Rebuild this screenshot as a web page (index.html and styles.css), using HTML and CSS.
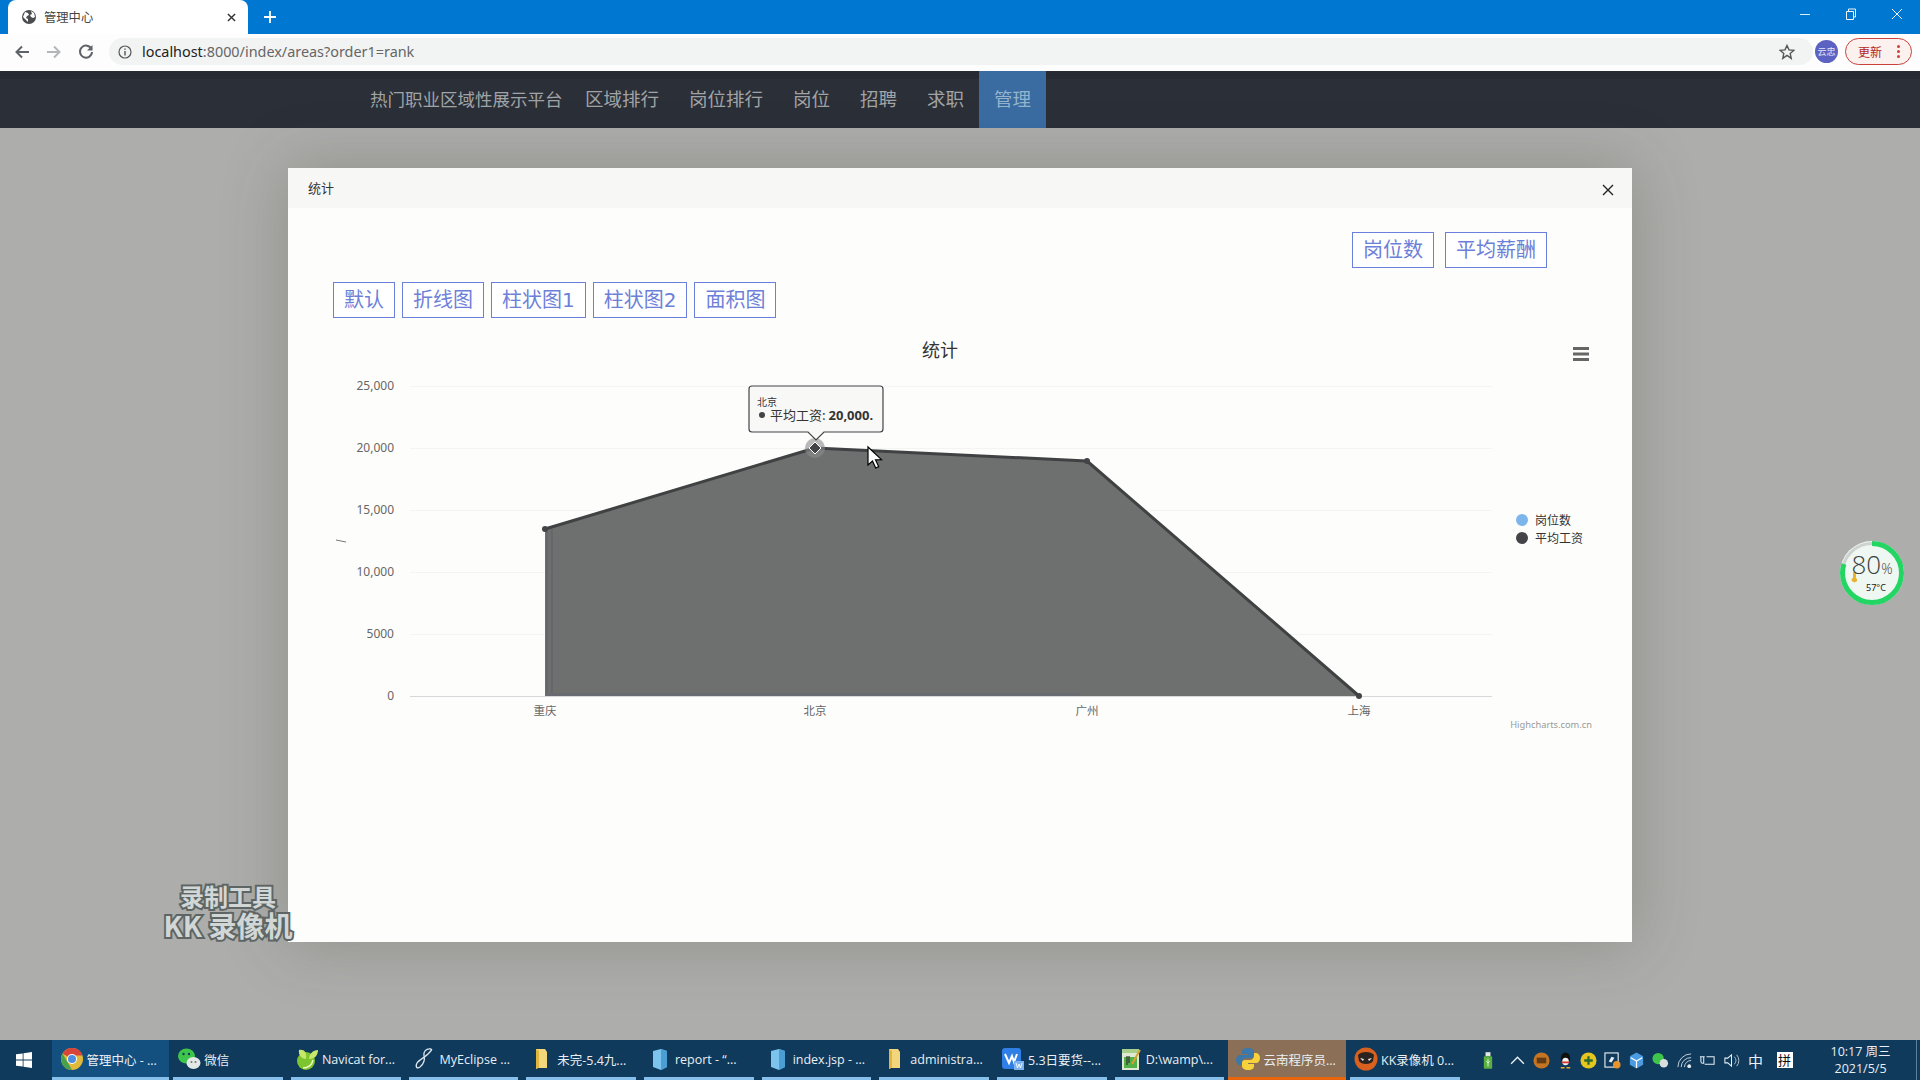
FILE: index.html
```html
<!DOCTYPE html>
<html lang="zh">
<head>
  <meta charset="UTF-8" />
  <title>管理中心</title>
  <link rel="stylesheet" href="styles.css">
</head>
<body>
  <div class="tabbar">
    <div class="tab">
      <svg class="favicon" viewBox="0 0 16 16"><circle cx="8" cy="8" r="7" fill="#4a4d50"/><path d="M4 3l3 1 1 2-2 1-1 2 2 1v3l-3-3-2-2zM10 2l3 2 1 4-2 1-2-1-1-2 2-1z" fill="#fff"/></svg>
      <span class="tab-title">管理中心</span>
      <svg class="tab-close" viewBox="0 0 10 10"><path d="M1 1l8 8M9 1l-8 8" stroke="#333" stroke-width="1.6"/></svg>
    </div>
    <svg class="new-tab" viewBox="0 0 12 12"><path d="M6 0v12M0 6h12" stroke="#fff" stroke-width="1.8"/></svg>
    <div class="win-btns">
      <svg viewBox="0 0 12 12"><path d="M1 6.5h10" stroke="#dfeefa" stroke-width="1"/></svg>
      <svg viewBox="0 0 12 12"><path d="M1.5 3.5h7v8h-7zM3.5 3.5v-2.5h7v8h-2" fill="none" stroke="#eef6fc" stroke-width="1"/></svg>
      <svg viewBox="0 0 12 12"><path d="M1 1l10 10M11 1l-10 10" stroke="#eef6fc" stroke-width="1"/></svg>
    </div>
  </div>

  <div class="toolbar">
    <svg class="tool-icon" viewBox="0 0 16 16"><path d="M15 8H3M8 2.5L2.5 8 8 13.5" fill="none" stroke="#5f6368" stroke-width="2"/></svg>
    <svg class="tool-icon" viewBox="0 0 16 16"><path d="M1 8h12M8 2.5L13.5 8 8 13.5" fill="none" stroke="#b4b6b8" stroke-width="2"/></svg>
    <svg class="tool-icon" viewBox="0 0 16 16"><path d="M13.5 5.2A6 6 0 1 0 14 8" fill="none" stroke="#5f6368" stroke-width="2"/><path d="M14.5 1v5.5H9z" fill="#5f6368"/></svg>
    <div class="omnibox">
      <svg class="info-icon" viewBox="0 0 14 14"><circle cx="7" cy="7" r="6" fill="none" stroke="#555" stroke-width="1.2"/><path d="M7 6v4.5M7 3.4v1.4" stroke="#555" stroke-width="1.4"/></svg>
      <span class="url"><span class="url-host">localhost</span>:8000/index/areas?order1=rank</span>
      <svg class="star" viewBox="0 0 16 16"><path d="M8 1.5l2 4.4 4.8.5-3.6 3.2 1 4.7L8 11.4l-4.2 2.9 1-4.7L1.2 6.4 6 5.9z" fill="none" stroke="#555" stroke-width="1.4"/></svg>
    </div>
    <div class="avatar">云忠</div>
    <div class="update-pill"><span>更新</span><span class="dots"><i></i><i></i><i></i></span></div>
  </div>

  <nav class="navbar">
    <a class="brand">热门职业区域性展示平台</a>
    <a class="nav-link nav-first">区域排行</a>
    <a class="nav-link">岗位排行</a>
    <a class="nav-link">岗位</a>
    <a class="nav-link">招聘</a>
    <a class="nav-link">求职</a>
    <a class="nav-link active">管理</a>
  </nav>

  <main class="stage">
    <section class="modal">
      <header class="modal-head">
        <span class="modal-title">统计</span>
        <svg class="modal-close" viewBox="0 0 12 12"><path d="M1 1l10 10M11 1L1 11" stroke="#222" stroke-width="1.4"/></svg>
      </header>
      <div class="modal-body">
        <div class="btn-row btn-row-right">
          <button class="btn">岗位数</button>
          <button class="btn">平均薪酬</button>
        </div>
        <div class="btn-row">
          <button class="btn">默认</button>
          <button class="btn">折线图</button>
          <button class="btn">柱状图1</button>
          <button class="btn">柱状图2</button>
          <button class="btn">面积图</button>
        </div>
        <svg class="chart" viewBox="0 0 1280 400">
          <text class="chart-title" x="620" y="27">统计</text>
          <g class="menu-icon"><rect x="1253" y="17" width="16" height="3"/><rect x="1253" y="22.5" width="16" height="3"/><rect x="1253" y="28" width="16" height="3"/></g>
          <g class="grid">
            <path d="M90 56.5H1172"/><path d="M90 118.5H1172"/><path d="M90 180.5H1172"/><path d="M90 242.5H1172"/><path d="M90 304.5H1172"/>
          </g>
          <path class="axis" d="M90 366.5H1172"/>
          <g class="y-labels">
            <text x="74" y="60">25,000</text>
            <text x="74" y="122">20,000</text>
            <text x="74" y="184">15,000</text>
            <text x="74" y="246">10,000</text>
            <text x="74" y="308">5000</text>
            <text x="74" y="370">0</text>
          </g>
          <path class="y-title" d="M16 210l10 2"/>
          <path class="area" d="M225 199L495 118 767 131 1039 366H225z"/>
          <path class="area-inner" d="M227 199v167M232 197v169"/>
          <path class="area-base" d="M225 364.500H760"/>
          <path class="area-line" d="M225 199L495 118 767 131 1039 366"/>
          <circle class="pt" cx="225" cy="199" r="3"/>
          <circle class="pt" cx="767" cy="131" r="3"/>
          <circle class="pt" cx="1039" cy="366" r="3"/>
          <circle class="halo" cx="495" cy="118" r="10"/>
          <path class="hover-pt" d="M495 112l6 6-6 6-6-6z"/>
          <g class="x-labels">
            <text x="225" y="385">重庆</text>
            <text x="495" y="385">北京</text>
            <text x="767" y="385">广州</text>
            <text x="1039" y="385">上海</text>
          </g>
          <g class="legend">
            <circle cx="1202" cy="190" r="6" fill="#7cb5ec"/>
            <text x="1215" y="195">岗位数</text>
            <circle cx="1202" cy="208" r="6" fill="#434348"/>
            <text x="1215" y="213">平均工资</text>
          </g>
          <text class="credit" x="1272" y="398">Highcharts.com.cn</text>
          <g class="tip">
            <path class="tip-box" d="M432 56h128a3 3 0 0 1 3 3v40a3 3 0 0 1-3 3H504l-8 8-8-8H432a3 3 0 0 1-3-3V59a3 3 0 0 1 3-3z"/>
            <text class="tip-head" x="437" y="76">北京</text>
            <circle cx="442" cy="85" r="3" fill="#434348"/>
            <text class="tip-line" x="450" y="89.500">平均工资: <tspan class="tip-num">20,000.</tspan></text>
          </g>
          <path class="cursor" d="M548 117v18l4.500-4 3.200 7 3-1.400-3.200-6.800 6-.2z"/>
        </svg>
      </div>
    </section>

    <div class="gauge">
      <svg viewBox="0 0 66 66">
        <circle cx="33" cy="33" r="32" fill="#eef7f1"/>
        <circle cx="33" cy="33" r="29.500" fill="none" stroke="#cfd3d0" stroke-width="3"/>
        <circle cx="33" cy="33" r="29.500" fill="none" stroke="#23d563" stroke-width="5" stroke-dasharray="148 186" transform="rotate(-90 33 33)"/>
        <path d="M13 41a3 3 0 0 0 5 0v-1a2 2 0 0 0-1-2v-5a1.500 1.500 0 0 0-3 0v5a2 2 0 0 0-1 3z" fill="#e8b32e"/>
      </svg>
      <div class="gauge-pct">80<small>%</small></div>
      <div class="gauge-temp">57°C</div>
    </div>

    <div class="watermark">
      <div class="wm-top">录制工具</div>
      <div class="wm-bottom">KK 录像机</div>
    </div>
  </main>

  <footer class="taskbar">
    <svg class="start" viewBox="0 0 16 16"><path d="M0 2.300l6.700-.9v6.200H0zM7.500 1.300L16 0v7.600H7.500zM0 8.400h6.700v6.200L0 13.700zM7.500 8.400H16V16l-8.500-1.200z" fill="#fff"/></svg>
    <div class="tb-item active">
      <svg class="tb-icon" viewBox="0 0 24 24"><circle cx="12" cy="12" r="11" fill="#e0b93a"/><path d="M12 12L2.500 6.500A11 11 0 0 1 22.500 8.500H12z" fill="#d8443a"/><path d="M12 23A11 11 0 0 1 2.500 6.500L8 16z" fill="#4aa14d"/><circle cx="12" cy="12" r="5" fill="#fff"/><circle cx="12" cy="12" r="4" fill="#4b8de0"/></svg>
      <span>管理中心 - ...</span>
    </div>
    <div class="tb-item">
      <svg class="tb-icon" viewBox="0 0 24 24"><ellipse cx="9.500" cy="9" rx="8.500" ry="7.500" fill="#3ec64a"/><ellipse cx="16.500" cy="16" rx="7" ry="6" fill="#e3e7e6"/><circle cx="6.500" cy="7" r="1.200" fill="#0f3a5c"/><circle cx="12" cy="7" r="1.200" fill="#0f3a5c"/><circle cx="14.500" cy="15" r="1" fill="#777"/><circle cx="18.500" cy="15" r="1" fill="#777"/></svg>
      <span>微信</span>
    </div>
    <div class="tb-item">
      <svg class="tb-icon" viewBox="0 0 24 24"><circle cx="11" cy="14" r="9" fill="#7cc52e"/><path d="M4 3c5-1 8 2 7 9-4 0-8-4-7-9zM14 12c0-5 4-9 9-9 0 5-3 9-9 9z" fill="#c8e86a"/><path d="M8 21c5 0 9-3 10-8" fill="none" stroke="#f2f7c8" stroke-width="1.500"/></svg>
      <span>Navicat for...</span>
    </div>
    <div class="tb-item">
      <svg class="tb-icon" viewBox="0 0 24 24"><path d="M18 2c-5-1-8 3-7 7 1 3 0 8-4 11-3 2-5 0-3-4 2-3 8-6 11-9 2-2 5-5 3-5z" fill="none" stroke="#dbe6ee" stroke-width="1.300"/></svg>
      <span>MyEclipse ...</span>
    </div>
    <div class="tb-item">
      <svg class="tb-icon" viewBox="0 0 24 24"><path d="M6 2h9l2 3v16H8l-2 1z" fill="#f3d57c"/><path d="M6 2v20l3-1.500V4z" fill="#e1b63e"/></svg>
      <span>未完-5.4九...</span>
    </div>
    <div class="tb-item">
      <svg class="tb-icon" viewBox="0 0 24 24"><path d="M5 4l8-2 6 2v16l-6 3-8-3z" fill="#7cc4ee"/><path d="M13 2l6 2v16l-6 3z" fill="#4b9ed4"/></svg>
      <span>report - “...</span>
    </div>
    <div class="tb-item">
      <svg class="tb-icon" viewBox="0 0 24 24"><path d="M5 4l8-2 6 2v16l-6 3-8-3z" fill="#7cc4ee"/><path d="M13 2l6 2v16l-6 3z" fill="#4b9ed4"/></svg>
      <span>index.jsp - ...</span>
    </div>
    <div class="tb-item">
      <svg class="tb-icon" viewBox="0 0 24 24"><path d="M6 2h9l2 3v16H8l-2 1z" fill="#f3d57c"/><path d="M6 2v20l3-1.500V4z" fill="#e1b63e"/></svg>
      <span>administra...</span>
    </div>
    <div class="tb-item">
      <svg class="tb-icon" viewBox="0 0 24 24"><rect x="1" y="1" width="19" height="21" rx="3" fill="#2f7fe6"/><path d="M4 7l4 9 3-7 2 6 3-8" fill="none" stroke="#fff" stroke-width="2"/><rect x="13" y="14" width="10" height="9" fill="#7cb2ee"/><path d="M15 16l1.500 5 1.500-4 1.500 4 1.500-5" fill="none" stroke="#fff" stroke-width=".9"/></svg>
      <span>5.3日要货--...</span>
    </div>
    <div class="tb-item">
      <svg class="tb-icon" viewBox="0 0 24 24"><rect x="3" y="2" width="17" height="21" fill="#dfe8d2"/><rect x="3" y="2" width="17" height="4" fill="#a9cf8a"/><rect x="5" y="10" width="13" height="11" fill="#55b047"/><path d="M8 9v9M10 9v7" stroke="#333" stroke-width="1.200"/><path d="M21 3L13 17" stroke="#d8a132" stroke-width="2"/></svg>
      <span>D:\wamp\...</span>
    </div>
    <div class="tb-item running">
      <svg class="tb-icon" viewBox="0 0 24 24"><path d="M12 1c-5 0-6 2-6 4v2h6v1H4c-2 0-4 2-4 5s2 5 4 5h2v-3c0-2 2-4 4-4h5c2 0 3-1 3-3V5c0-2-2-4-6-4z" fill="#3c78aa"/><path d="M12 23c5 0 6-2 6-4v-2h-6v-1h8c2 0 4-2 4-5s-2-5-4-5h-2v3c0 2-2 4-4 4H9c-2 0-3 1-3 3v3c0 2 2 4 6 4z" fill="#f6d23c"/></svg>
      <span>云南程序员...</span>
    </div>
    <div class="tb-item">
      <svg class="tb-icon" viewBox="0 0 24 24"><circle cx="12" cy="12" r="11.500" fill="#d9601f"/><path d="M4 8c3-4 13-4 16 0l-1 6c-2 4-12 4-14 0z" fill="#2a2320"/><path d="M6 11l4 1-1 2zM18 11l-4 1 1 2z" fill="#eee"/></svg>
      <span>KK录像机 0...</span>
    </div>

    <div class="tray">
      <svg class="tray-slot tray-usb" viewBox="0 0 12 20"><rect x="3" y="0" width="6" height="5" fill="#dfe6dc"/><rect x="1" y="5" width="10" height="15" rx="1" fill="#58b13f"/><path d="M6 8v9M4 11l2 2 2-2" fill="none" stroke="#fff" stroke-width="1"/></svg>
      <svg class="tray-slot" viewBox="0 0 16 16"><path d="M2 11l6-6 6 6" fill="none" stroke="#e8eef3" stroke-width="1.300"/></svg>
      <svg class="tray-slot" viewBox="0 0 18 18"><circle cx="9" cy="9" r="8.500" fill="#c47422"/><rect x="4" y="6" width="10" height="6" fill="#5f3b18"/></svg>
      <svg class="tray-slot" viewBox="0 0 18 18"><ellipse cx="9" cy="7" rx="5" ry="6.500" fill="#111"/><ellipse cx="9" cy="10" rx="3.500" ry="4" fill="#f2f2f2"/><path d="M4 10h10l-2 2H6z" fill="#d8342c"/><path d="M4 16h4v1.500H4zM10 16h4v1.500h-4z" fill="#e8a92a"/></svg>
      <svg class="tray-slot" viewBox="0 0 18 18"><circle cx="9" cy="9" r="8.500" fill="#e6c51f"/><path d="M9 4.500v9M4.500 9h9" stroke="#2a6a2e" stroke-width="2.400"/></svg>
      <svg class="tray-slot" viewBox="0 0 18 18"><rect x="1" y="1" width="14" height="15" fill="none" stroke="#e8eef3" stroke-width="1.200"/><path d="M5 10l3-5 3 1-3 5z" fill="#e8eef3"/><circle cx="13.500" cy="13.500" r="4" fill="#e8942a"/></svg>
      <svg class="tray-slot" viewBox="0 0 18 18"><path d="M9 .5l7 4v9l-7 4-7-4v-9z" fill="#4b9be0"/><path d="M3 6l6 3.500L15 6M9 9.500V17" fill="none" stroke="#fff" stroke-width="1.300"/></svg>
      <svg class="tray-slot" viewBox="0 0 18 18"><circle cx="6.500" cy="7" r="6" fill="#3ec64a"/><circle cx="12.500" cy="12" r="4.500" fill="#d8dfdd"/></svg>
      <svg class="tray-slot" viewBox="0 0 18 18"><path d="M2 16a14 14 0 0 1 14-14M5.500 16a10 10 0 0 1 10.500-10M9 16a7 7 0 0 1 7-7" fill="none" stroke="#c9d4dc" stroke-width="1"/><circle cx="14" cy="15" r="2" fill="#e8eef3"/></svg>
      <svg class="tray-slot" viewBox="0 0 18 18"><path d="M2 5v5a2 2 0 0 0 2 2h1v-3M5 9V5M1 5h5M8 5h8v8H6" fill="none" stroke="#e8eef3" stroke-width="1.100"/></svg>
      <svg class="tray-slot" viewBox="0 0 18 18"><path d="M2 6.500h3l4-3.500v12l-4-3.500H2z" fill="none" stroke="#e8eef3" stroke-width="1.100"/><path d="M12 5a6 6 0 0 1 0 8M14.500 3a9 9 0 0 1 0 12" fill="none" stroke="#b9c6d0" stroke-width="1"/></svg>
      <span class="tray-lang">中</span>
      <span class="tray-pin">拼</span>
      <div class="clock"><div>10:17 周三</div><div>2021/5/5</div></div>
      <div class="show-desktop"></div>
    </div>
  </footer>
</body>
</html>
```

FILE: styles.css
```css
* { box-sizing: border-box; }
html, body { height: 100%; }
body {
  margin: 0;
  display: flex;
  flex-direction: column;
  height: 1080px;
  overflow: hidden;
  font-family: "Noto Sans", "Noto Sans CJK SC", sans-serif;
  background: #adaeab;
}

/* browser chrome */
.tabbar {
  height: 34px;
  background: #0078d2;
  display: flex;
  align-items: flex-end;
  padding-left: 8px;
}
.tab {
  width: 240px;
  height: 34px;
  background: #fff;
  border-radius: 8px 8px 0 0;
  display: flex;
  align-items: center;
  padding: 0 11px 0 13px;
  font-size: 12.300px;
  color: #444;
  font-family: "Noto Sans CJK SC", sans-serif;
}
.favicon { width: 16px; height: 16px; margin-right: 7px; }
.tab-title { flex: 1; }
.tab-close { width: 9px; height: 9px; margin-right: 1px; }
.new-tab { width: 12px; height: 12px; margin: 0 0 11px 16px; }
.win-btns {
  margin-left: auto;
  display: flex;
  align-self: flex-start;
  gap: 34px;
  padding: 8px 17px 0 0;
}
.win-btns svg { width: 12px; height: 12px; }

.toolbar {
  height: 37px;
  background: #fdfdfd;
  display: flex;
  align-items: center;
  padding: 0 0 2px 14px;
}
.tool-icon { width: 16px; height: 16px; margin-right: 16px; }
.omnibox {
  flex: 1;
  height: 27px;
  margin-left: -1px;
  margin-right: 2px;
  background: #f2f3f3;
  border-radius: 14px;
  display: flex;
  align-items: center;
  padding: 0 18px 0 9px;
  font-size: 14.400px;
  color: #666;
}
.info-icon { width: 14px; height: 14px; margin-right: 10px; }
.url { flex: 1; margin-top: -1px; }
.url-host { color: #222; }
.star { width: 16px; height: 16px; }
.avatar {
  width: 23px;
  height: 23px;
  border-radius: 50%;
  background: #5b62c2;
  color: #e4e6f8;
  font-size: 9px;
  line-height: 23px;
  text-align: center;
  font-family: "Noto Sans CJK SC", sans-serif;
}
.update-pill {
  width: 67px;
  height: 27px;
  margin: 0 8px 0 7px;
  border: 1px solid #c9413a;
  border-radius: 14px;
  background: #fbf1ef;
  color: #b3261e;
  font-size: 12px;
  display: flex;
  align-items: center;
  justify-content: space-between;
  padding: 0 11px 0 12px;
  font-family: "Noto Sans CJK SC", sans-serif;
}
.dots { display: flex; flex-direction: column; gap: 2px; }
.dots i { width: 3px; height: 3px; border-radius: 50%; background: #c9413a; }

/* site nav, dimmed by the modal backdrop */
.navbar {
  height: 57px;
  background: #2b2f38;
  border-top: 8px solid #272a33;
  display: flex;
  padding-left: 370px;
  font-size: 18.500px;
  color: #a1a4a6;
  font-family: "Noto Sans CJK SC", sans-serif;
}
.navbar a { display: flex; align-items: center; height: 57px; margin-top: -8px; padding-bottom: 3px; }
.brand { font-size: 17.500px; width: 193px; }
.nav-link { padding: 0 15px; }
.nav-first { margin-left: 7px; }
.nav-link.active { background: #3a6ca2; color: #93b4cc; }

.stage { flex: 1; position: relative; padding-top: 40px; }

.modal {
  width: 1344px;
  height: 774px;
  margin-left: 288px;
  background: #fdfefc;
  box-shadow: 0 0 60px rgba(60, 60, 55, 0.28);
}
.modal-head {
  height: 40px;
  background: #f7f7f5;
  display: flex;
  align-items: center;
  justify-content: space-between;
  padding: 0 18px 0 20px;
  font-size: 13px;
  color: #333;
  font-family: "Noto Sans CJK SC", sans-serif;
}
.modal-title { margin-top: -2px; }
.modal-close { width: 12px; height: 12px; margin-top: 4px; }
.modal-body { padding: 24px 32px 0; }

.btn-row { display: flex; gap: 7px; padding-left: 13px; margin-bottom: 14px; }
.btn-row-right { justify-content: flex-end; gap: 11px; padding-right: 53px; }
.btn {
  height: 36px;
  padding: 0 10px;
  background: #fff;
  border: 1px solid #6a80dc;
  border-radius: 0;
  color: #6d80d8;
  font-size: 20px;
  font-family: "DejaVu Sans", "Noto Sans CJK SC", sans-serif;
  line-height: 1;
}

/* chart */
.chart {
  display: block;
  width: 1280px;
  height: 400px;
  margin-top: -2px;
  font-family: "Noto Sans CJK SC", sans-serif;
}
.chart-title { font-size: 18px; fill: #333; text-anchor: middle; }
.menu-icon rect { fill: #666; }
.grid path { stroke: #f4f4f2; stroke-width: 1; fill: none; }
.axis { stroke: #d6d8d9; stroke-width: 1; fill: none; }
.y-labels text { font-size: 12px; fill: #666; text-anchor: end; font-family: "Noto Sans", sans-serif; }
.y-title { stroke: #777; stroke-width: 1; }
.x-labels text { font-size: 11.500px; fill: #666; text-anchor: middle; }
.area { fill: #6e7070; }
.area-inner { stroke: #62666a; stroke-width: 1.500; fill: none; }
.area-base { stroke: #686c72; stroke-width: 3; fill: none; }
.area-line { fill: none; stroke: #3f4142; stroke-width: 3; stroke-linejoin: round; }
.pt { fill: #434348; }
.halo { fill: #8a8b8b; opacity: 0.6; }
.hover-pt { fill: #434348; stroke: #fff; stroke-width: 1; }
.legend text { font-size: 12px; fill: #333; }
.credit { font-size: 9.300px; fill: #999; text-anchor: end; font-family: "Noto Sans", sans-serif; }
.tip-box { fill: #f8f8f7; stroke: #434348; stroke-width: 1.200; }
.tip-head { font-size: 10px; fill: #333; }
.tip-line { font-size: 13px; fill: #333; }
.tip-num { font-weight: 700; font-family: "Noto Sans", sans-serif; }
.cursor { fill: #fff; stroke: #000; stroke-width: 1.200; }

/* things floating over the page */
.gauge {
  position: absolute;
  left: 1839px;
  top: 412px;
  width: 66px;
  height: 66px;
  text-align: center;
  color: #3b3f40;
}
.gauge svg { position: absolute; left: 0; top: 0; width: 66px; height: 66px; }
.gauge-pct {
  position: absolute;
  left: 0;
  right: 0;
  top: 10px;
  font-size: 26px;
  line-height: 28px;
  font-weight: 300;
  font-family: "Open Sans", sans-serif;
}
.gauge-pct small { font-size: 14px; }
.gauge-temp {
  position: absolute;
  left: 27px;
  top: 42px;
  font-size: 9px;
  line-height: 11px;
  color: #222;
}
.watermark {
  position: absolute;
  left: 160px;
  top: 756px;
  width: 136px;
  text-align: center;
  font-weight: 700;
  font-family: "Noto Sans CJK SC", sans-serif;
  color: #d2d6d5;
  -webkit-text-stroke: 4px #5e6665;
  paint-order: stroke fill;
  line-height: 1;
}
.wm-top { font-size: 24px; letter-spacing: 0; }
.wm-bottom { font-size: 28px; margin-top: 3px; white-space: nowrap; }

/* windows taskbar */
.taskbar {
  height: 40px;
  background: #0f3a5c;
  display: flex;
  align-items: stretch;
  padding-left: 16px;
  color: #e9eff4;
  font-size: 12.500px;
  font-family: "Open Sans", "Noto Sans CJK SC", sans-serif;
}
.start { width: 16px; height: 16px; margin: 12px 19.500px 0 0; flex: none; }
.tb-item {
  flex: 0 0 117.700px;
  display: flex;
  align-items: center;
  padding: 0 0 2px 8px;
  position: relative;
  white-space: nowrap;
}
.tb-item::after {
  content: "";
  position: absolute;
  left: 4px;
  right: 4px;
  bottom: 0;
  height: 3px;
  background: #86c0ea;
}
.tb-item.active { background: #14507f; }
.tb-item.active::after { left: 0; right: 0; }
.tb-item.running { background: #8b6f57; }
.tb-item.running::after { left: 0; right: 0; background: #e8650e; }
.tb-icon { width: 24px; height: 24px; margin-right: 3px; flex: none; }
.tray { display: flex; align-items: center; padding-left: 12px; flex: 1; }
.tray-slot { width: 17px; height: 17px; margin: 0 3.400px; flex: none; }
.tray-usb { width: 10px; height: 17px; margin: 0 13px 0 7px; }
.tray-lang { width: 24px; text-align: center; font-size: 15px; font-family: "Noto Sans CJK SC", sans-serif; }
.tray-pin {
  width: 16px;
  height: 16px;
  margin-left: 9px;
  background: #fff;
  color: #111;
  font-size: 13px;
  line-height: 16px;
  text-align: center;
  font-family: "Noto Sans CJK SC", sans-serif;
}
.clock { margin-left: 33px; width: 70px; text-align: center; line-height: 17px; font-size: 12.500px; flex: none; white-space: nowrap; }
.show-desktop { margin-left: auto; width: 1px; height: 100%; background: #5f7f9a; margin-right: 3px; }
```
